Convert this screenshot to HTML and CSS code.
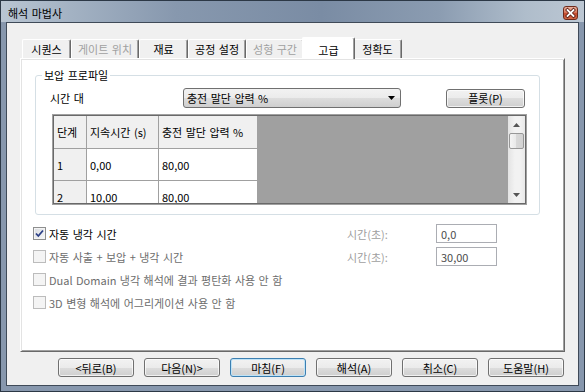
FILE: index.html
```html
<!DOCTYPE html>
<html>
<head>
    <meta charset="UTF-8">
    <title>해석 마법사</title>
    <link rel="stylesheet" href="styles.css">
</head>
<body>
    <div class="window">
        <div class="titlebar">
            <span class="title">해석 마법사</span>
            <span class="close-btn">
                <svg width="15" height="14" viewBox="0 0 15 14">
                    <path d="M4.5 4 L10.5 10 M10.5 4 L4.5 10" stroke="#5a1a10" stroke-width="3.4" stroke-linecap="square"/>
                    <path d="M4.5 4 L10.5 10 M10.5 4 L4.5 10" stroke="#ffffff" stroke-width="1.8" stroke-linecap="square"/>
                </svg>
            </span>
        </div>

        <div class="client">
            <div class="tabs">
                <div class="tab">시퀀스</div>
                <div class="tab disabled">게이트 위치</div>
                <div class="tab">재료</div>
                <div class="tab">공정 설정</div>
                <div class="tab disabled">성형 구간</div>
                <div class="tab active">고급</div>
                <div class="tab">정확도</div>
            </div>

            <div class="panel">
                <fieldset class="group">
                    <legend>보압 프로파일</legend>
                    <div class="profile-row">
                        <span>시간 대</span>
                        <div class="combo">
                            <span>충전 말단 압력 %</span>
                            <svg width="7" height="4" viewBox="0 0 7 4"><path d="M0 0 H7 L3.5 4 Z" fill="#000"/></svg>
                        </div>
                        <button class="btn plot-btn">플롯(P)</button>
                    </div>

                    <div class="grid">
                        <div class="cells">
                            <div class="cell head">단계</div>
                            <div class="cell head">지속시간 (s)</div>
                            <div class="cell head">충전 말단 압력 %</div>
                            <div class="cell head">1</div>
                            <div class="cell">0,00</div>
                            <div class="cell">80,00</div>
                            <div class="cell head">2</div>
                            <div class="cell">10,00</div>
                            <div class="cell">80,00</div>
                        </div>
                        <div class="vscroll">
                            <span class="scroll-arrow">
                                <svg width="7" height="4" viewBox="0 0 7 4"><path d="M0 4 L3.5 0 L7 4 Z" fill="#555"/></svg>
                            </span>
                            <span class="thumb"></span>
                            <span class="track"></span>
                            <span class="scroll-arrow">
                                <svg width="7" height="4" viewBox="0 0 7 4"><path d="M0 0 H7 L3.5 4 Z" fill="#555"/></svg>
                            </span>
                        </div>
                    </div>
                </fieldset>

                <div class="options">
                    <div class="option">
                        <label class="check">
                            <span class="box">
                                <svg width="11" height="11" viewBox="0 0 11 11"><path d="M2 5.5 L4.3 8 L9 2.5" fill="none" stroke="#2b3f86" stroke-width="1.8"/></svg>
                            </span>
                            자동 냉각 시간
                        </label>
                        <span class="field-label">시간(초):</span>
                        <span class="field">0,0</span>
                    </div>
                    <div class="option">
                        <label class="check disabled"><span class="box"></span>자동 사출 + 보압 + 냉각 시간</label>
                        <span class="field-label">시간(초):</span>
                        <span class="field">30,00</span>
                    </div>
                    <div class="option">
                        <label class="check disabled"><span class="box"></span>Dual Domain 냉각 해석에 결과 평탄화 사용 안 함</label>
                    </div>
                    <div class="option">
                        <label class="check disabled"><span class="box"></span>3D 변형 해석에 어그리게이션 사용 안 함</label>
                    </div>
                </div>
            </div>

            <div class="buttons">
                <button class="btn">&lt;뒤로(B)</button>
                <button class="btn">다음(N)&gt;</button>
                <button class="btn default">마침(F)</button>
                <button class="btn">해석(A)</button>
                <button class="btn">취소(C)</button>
                <button class="btn">도움말(H)</button>
            </div>
        </div>
    </div>
</body>
</html>
```

FILE: styles.css
```css
:root {
    --dialog-bg: #f0f0f0;
    --frame: #8797ad;
    --shadow: #a0a0a0;
    --dark-shadow: #696969;
    --gray-text: #6d6d6d;
    --disabled-text: #a0a0a0;
}

* {
    margin: 0;
    padding: 0;
    box-sizing: border-box;
}

body {
    font-family: "Noto Sans CJK KR", "Noto Sans", sans-serif;
    font-size: 11px;
    line-height: 14px;
    word-spacing: 1px;
    color: #000;
    background: #fff;
}

.window {
    width: 585px;
    height: 392px;
    display: flex;
    flex-direction: column;
    padding: 0 5px 5px;
    border: 1px solid #2c3846;
    background: var(--frame);
}

/* title bar */
.titlebar {
    height: 21px;
    margin: 0 -5px;
    padding: 2px 6px 0 7px;
    display: flex;
    align-items: center;
    justify-content: space-between;
    background: linear-gradient(to right, #b9c5d2 0%, #a3b2c3 12%, #8798ae 30%, #7a8ca4 55%, #8b9cb1 75%, #afbdcb 90%, #bcc7d3 100%);
}

.title {
    color: #000;
}

.close-btn {
    width: 15px;
    height: 14px;
    display: flex;
    border: 1px solid #6e2a1c;
    border-radius: 3px;
    background: linear-gradient(#eab3a1, #d97a5f 45%, #c24a2e 55%, #d26a48);
}

.close-btn svg {
    margin: -1px;
}

/* client area */
.client {
    flex: 1;
    display: flex;
    flex-direction: column;
    padding: 14px 13px 0;
    border: 1px solid #3f4a58;
    background: var(--dialog-bg);
}

.tabs {
    height: 21px;
    display: flex;
    align-items: flex-end;
    padding-left: 2px;
}

.tab {
    height: 19px;
    min-width: 49px;
    padding: 0 6px;
    display: flex;
    align-items: center;
    justify-content: center;
    white-space: nowrap;
    border-top: 1px solid #fff;
    border-left: 1px solid #fff;
    border-right: 1px solid var(--dark-shadow);
    border-radius: 2px 2px 0 0;
    box-shadow: inset -1px 0 var(--shadow);
    background: var(--dialog-bg);
}

.tab.disabled {
    color: var(--disabled-text);
}

.tab.active {
    height: 22px;
    margin: 0 -2px -1px;
    min-width: 53px;
    padding-top: 2px;
    position: relative;
    z-index: 1;
    background: #fff;
}

.panel {
    height: 294px;
    border: 1px solid;
    border-color: #fff var(--dark-shadow) var(--dark-shadow) #fff;
    box-shadow: inset 1px 1px #e3e3e3, inset -1px -1px var(--shadow);
    background: #fff;
}

/* group box */
.group {
    margin: 9px 24px 0 14px;
    padding: 0 12px 9px 14px;
    border: 1px solid #d5dfe5;
    border-radius: 3px;
}

.group legend {
    margin-left: -8px;
    padding: 0 2px;
}

.profile-row {
    height: 20px;
    margin-top: 6px;
    display: grid;
    grid-template-columns: 133px 218px 1fr;
    align-items: center;
}

.combo {
    height: 20px;
    padding: 0 5px 0 3px;
    display: flex;
    align-items: center;
    justify-content: space-between;
    border: 1px solid #707070;
    border-radius: 3px;
    background: linear-gradient(#f2f2f2, #ebebeb 50%, #dddddd 50%, #cfcfcf);
}

.btn {
    width: 76px;
    height: 19px;
    font: inherit;
    word-spacing: inherit;
    color: #000;
    border: 1px solid #707070;
    border-radius: 3px;
    background: linear-gradient(#f2f2f2, #ebebeb 50%, #dddddd 50%, #cfcfcf);
    box-shadow: inset 0 0 0 1px rgba(255, 255, 255, 0.7);
}

.plot-btn {
    width: 79px;
    justify-self: end;
    margin-right: 2px;
}

.btn.default {
    border-color: #3c7fb1;
    box-shadow: inset 0 0 0 1px #bfe3f7;
}

/* grid control */
.grid {
    height: 91px;
    margin: 6px 0 0 2px;
    display: grid;
    grid-template-columns: 1fr 17px;
    border: 1px solid var(--shadow);
    padding: 1px;
    background: var(--dark-shadow);
}

.cells {
    display: grid;
    grid-template-columns: 33px 72px 99px;
    grid-auto-rows: 33px 32px;
    align-content: start;
    overflow: hidden;
    background: var(--shadow);
}

.cell {
    padding-left: 3px;
    display: flex;
    align-items: center;
    white-space: nowrap;
    border-right: 1px solid var(--shadow);
    border-bottom: 1px solid var(--shadow);
    background: #fff;
}

.cell.head {
    background: var(--dialog-bg);
}

.vscroll {
    display: flex;
    flex-direction: column;
    align-items: center;
    background: linear-gradient(to right, #e3e3e3, #f2f2f2 40%, #f2f2f2 70%, #e8e8e8);
}

.scroll-arrow {
    height: 17px;
    display: flex;
    align-items: center;
}

.thumb {
    width: 15px;
    height: 16px;
    border: 1px solid #979797;
    border-radius: 2px;
    background: linear-gradient(to right, #f4f4f4, #e8e8e8 50%, #d8d8d8 50%, #d2d2d2);
}

.track {
    flex: 1;
}

/* options below the group */
.options {
    margin: 7px 0 0 12px;
}

.option {
    height: 23px;
    display: grid;
    grid-template-columns: 314px 89px 61px;
    align-items: center;
}

.check {
    display: flex;
    align-items: center;
    gap: 3px;
    white-space: nowrap;
}

.check.disabled {
    color: var(--gray-text);
}

.box {
    width: 13px;
    height: 13px;
    display: flex;
    border: 1px solid #8e8f8f;
    background: linear-gradient(135deg, #d8dbe0, #f8f8f8);
    box-shadow: inset 0 0 0 1px #f4f4f4;
}

.check.disabled .box {
    border-color: #bcbcbc;
    background: #f4f4f4;
    box-shadow: none;
}

.field-label {
    color: var(--disabled-text);
}

.field {
    height: 19px;
    padding-left: 4px;
    display: flex;
    align-items: center;
    color: #4d4d4d;
    border: 1px solid #abadb3;
    background: #fff;
}

/* bottom buttons */
.buttons {
    margin-top: 6px;
    padding-right: 1px;
    display: flex;
    justify-content: flex-end;
    gap: 10px;
}
```
